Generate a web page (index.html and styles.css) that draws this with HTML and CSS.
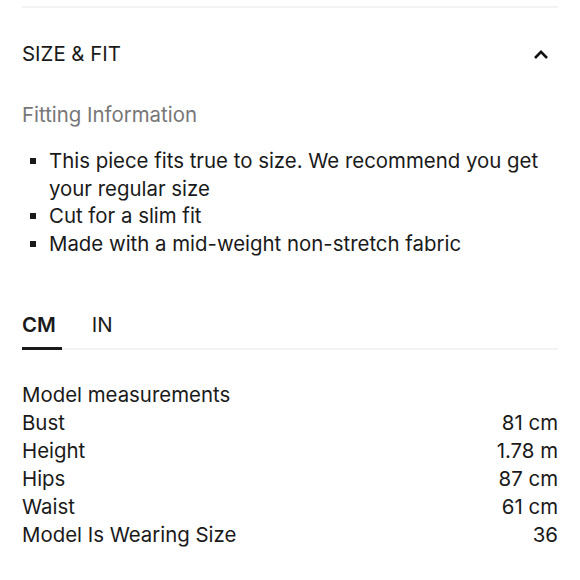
FILE: index.html
```html
<!DOCTYPE html>
<html>
<head>
<meta charset="utf-8">
<link rel="stylesheet" href="styles.css">
</head>
<body>
<div class="page">
  <div class="divider"></div>
  <div class="header">
    <span class="title">SIZE &amp; FIT</span>
    <svg class="chev" width="16" height="11" viewBox="0 0 16 11"><path d="M2 9 L8 2.8 L14 9" fill="none" stroke="#111" stroke-width="2.6"/></svg>
  </div>
  <div class="subtitle">Fitting Information</div>
  <ul class="bullets">
    <li>This piece fits true to size. We recommend you get your regular size</li>
    <li>Cut for a slim fit</li>
    <li>Made with a mid-weight non-stretch fabric</li>
  </ul>
  <div class="tabs">
    <div class="tab active">CM</div>
    <div class="tab">IN</div>
  </div>
  <div class="measures">
    <div class="row"><span>Model measurements</span></div>
    <div class="row"><span>Bust</span><span>81 cm</span></div>
    <div class="row"><span>Height</span><span>1.78 m</span></div>
    <div class="row"><span>Hips</span><span>87 cm</span></div>
    <div class="row"><span>Waist</span><span>61 cm</span></div>
    <div class="row"><span>Model Is Wearing Size</span><span>36</span></div>
  </div>
</div>
</body>
</html>
```

FILE: styles.css
```css
html, body { margin: 0; padding: 0; background: #fff; }
body { font-family: Inter, "Liberation Sans", Arial, sans-serif; color: #1a1a1a; font-size: 20.4px; }
.page { padding: 6px 22px 0 22px; }
.divider { height: 2px; background: #f3f3f3; }
.header { display: flex; justify-content: space-between; align-items: center; height: 28px; margin-top: 32px; padding-right: 9px; }
.title { line-height: 28px; }
.chev { display: block; }
.subtitle { color: #777; margin-top: 33px; line-height: 28px; }
.bullets { list-style: none; margin: 18px 0 0 0; padding: 0 0 0 27px; }
.bullets li { position: relative; line-height: 27.7px; }
.bullets li::before { content: ""; position: absolute; left: -19px; top: 11px; width: 6px; height: 6px; background: #1a1a1a; }
.tabs { display: flex; margin-top: 52px; border-bottom: 2px solid #f3f3f3; }
.tab { padding: 2px 0 9px 0; margin-right: 33px; line-height: 26px; }
.tab.active { font-weight: 600; border-bottom: 3px solid #1a1a1a; margin-bottom: -2px; padding-right: 6px; margin-right: 30px; }
.measures { margin-top: 31px; }
.row { display: flex; justify-content: space-between; line-height: 28px; }
```
